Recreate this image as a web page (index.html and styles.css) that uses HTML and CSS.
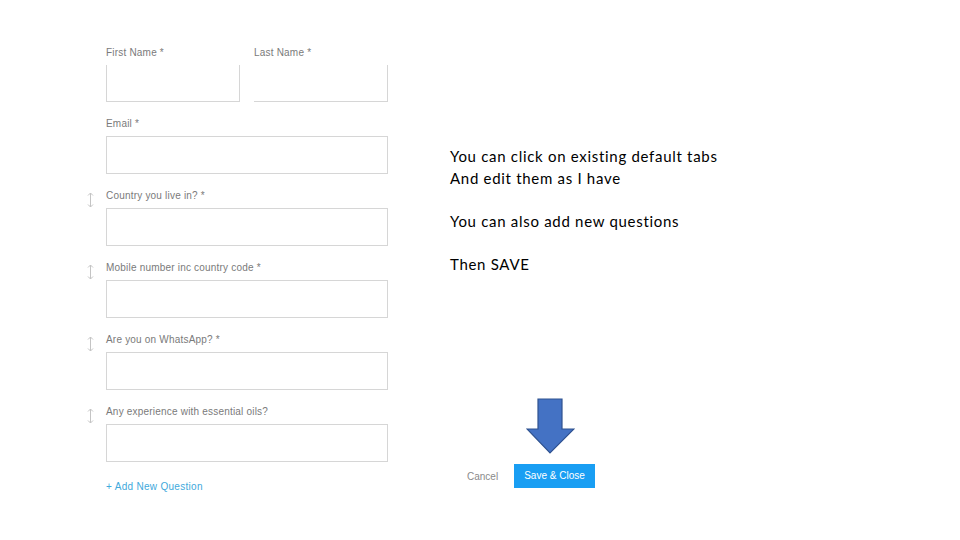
FILE: index.html
```html
<!DOCTYPE html>
<html>
<head>
<meta charset="utf-8">
<link rel="stylesheet" href="styles.css">
</head>
<body>
<div class="page">
  <div class="form">
    <div class="field">
      <div class="handle"></div>
      <div class="names">
        <div class="name">
          <div class="label">First Name *</div>
          <div class="box box-open first"></div>
        </div>
        <div class="name">
          <div class="label">Last Name *</div>
          <div class="box box-open last"></div>
        </div>
      </div>
    </div>
    <div class="field">
      <div class="handle"></div>
      <div>
        <div class="label">Email *</div>
        <div class="box"></div>
      </div>
    </div>
    <div class="field">
      <div class="handle"><svg width="9" height="16" viewBox="0 0 9 16"><path d="M4.5 1v14M2 3.5l2.5-2.5 2.5 2.5M2 12.5l2.5 2.5 2.5-2.5" fill="none" stroke="#c4c4c4" stroke-width="1"/></svg></div>
      <div>
        <div class="label">Country you live in? *</div>
        <div class="box"></div>
      </div>
    </div>
    <div class="field">
      <div class="handle"><svg width="9" height="16" viewBox="0 0 9 16"><path d="M4.5 1v14M2 3.5l2.5-2.5 2.5 2.5M2 12.5l2.5 2.5 2.5-2.5" fill="none" stroke="#c4c4c4" stroke-width="1"/></svg></div>
      <div>
        <div class="label">Mobile number inc country code *</div>
        <div class="box"></div>
      </div>
    </div>
    <div class="field">
      <div class="handle"><svg width="9" height="16" viewBox="0 0 9 16"><path d="M4.5 1v14M2 3.5l2.5-2.5 2.5 2.5M2 12.5l2.5 2.5 2.5-2.5" fill="none" stroke="#c4c4c4" stroke-width="1"/></svg></div>
      <div>
        <div class="label">Are you on WhatsApp? *</div>
        <div class="box"></div>
      </div>
    </div>
    <div class="field">
      <div class="handle"><svg width="9" height="16" viewBox="0 0 9 16"><path d="M4.5 1v14M2 3.5l2.5-2.5 2.5 2.5M2 12.5l2.5 2.5 2.5-2.5" fill="none" stroke="#c4c4c4" stroke-width="1"/></svg></div>
      <div>
        <div class="label">Any experience with essential oils?</div>
        <div class="box"></div>
      </div>
    </div>
    <div class="field">
      <div class="handle"></div>
      <div class="add">+ Add New Question</div>
    </div>
  </div>
  <div class="side">
    <div class="notes">
      <p>You can click on existing default tabs<br>And edit them as I have</p>
      <p>You can also add new questions</p>
      <p>Then SAVE</p>
    </div>
    <svg class="arrow" width="49" height="57" viewBox="0 0 49 57"><path d="M12 1h24v30h12L24 55 1 31h11z" fill="#4472c4" stroke="#2f528f" stroke-width="1.2"/></svg>
    <div class="actions">
      <span class="cancel">Cancel</span>
      <span class="save">Save &amp; Close</span>
    </div>
  </div>
</div>
</body>
</html>
```

FILE: styles.css
```css
html, body {
  margin: 0;
  padding: 0;
  background: #ffffff;
}
.page {
  width: 960px;
  height: 540px;
  display: flex;
  overflow: hidden;
}
.form {
  margin-left: 84px;
  padding-top: 47px;
  width: 306px;
  display: flex;
  flex-direction: column;
  gap: 16px;
  font-family: "Liberation Sans", Arial, sans-serif;
}
.field {
  display: grid;
  grid-template-columns: 22px 282px;
}
.handle {
  padding-top: 2px;
  padding-left: 2px;
}
.label {
  font-size: 10px;
  line-height: 12px;
  color: #7a7a7a;
  margin-bottom: 6px;
  letter-spacing: 0.2px;
}
.box {
  height: 36px;
  border: 1px solid #d6d6d6;
}
.names {
  display: flex;
  gap: 14px;
}
.name {
  width: 134px;
}
.box-open {
  border-top: none;
  height: 36px;
}
.last {
  border-left: none;
}
.add {
  font-size: 10px;
  line-height: 12px;
  color: #41a9dc;
  margin-top: 3px;
  letter-spacing: 0.3px;
}
.side {
  margin-left: 60px;
  padding-top: 145px;
  display: flex;
  flex-direction: column;
}
.notes {
  font-family: "Lato", "Open Sans", sans-serif;
  font-size: 15px;
  line-height: 22px;
  color: #000;
  letter-spacing: 0.7px;
}
.notes p {
  margin: 0 0 21px 0;
}
.arrow {
  display: block;
  margin-top: 102px;
  margin-left: 76px;
}
.actions {
  margin-top: 9px;
  display: flex;
  align-items: center;
  font-family: "Liberation Sans", Arial, sans-serif;
  font-size: 10px;
}
.cancel {
  color: #8a8a8a;
  margin-left: 17px;
  width: 47px;
}
.save {
  background: #199ef3;
  color: #fff;
  width: 81px;
  height: 24px;
  line-height: 24px;
  text-align: center;
}
```
